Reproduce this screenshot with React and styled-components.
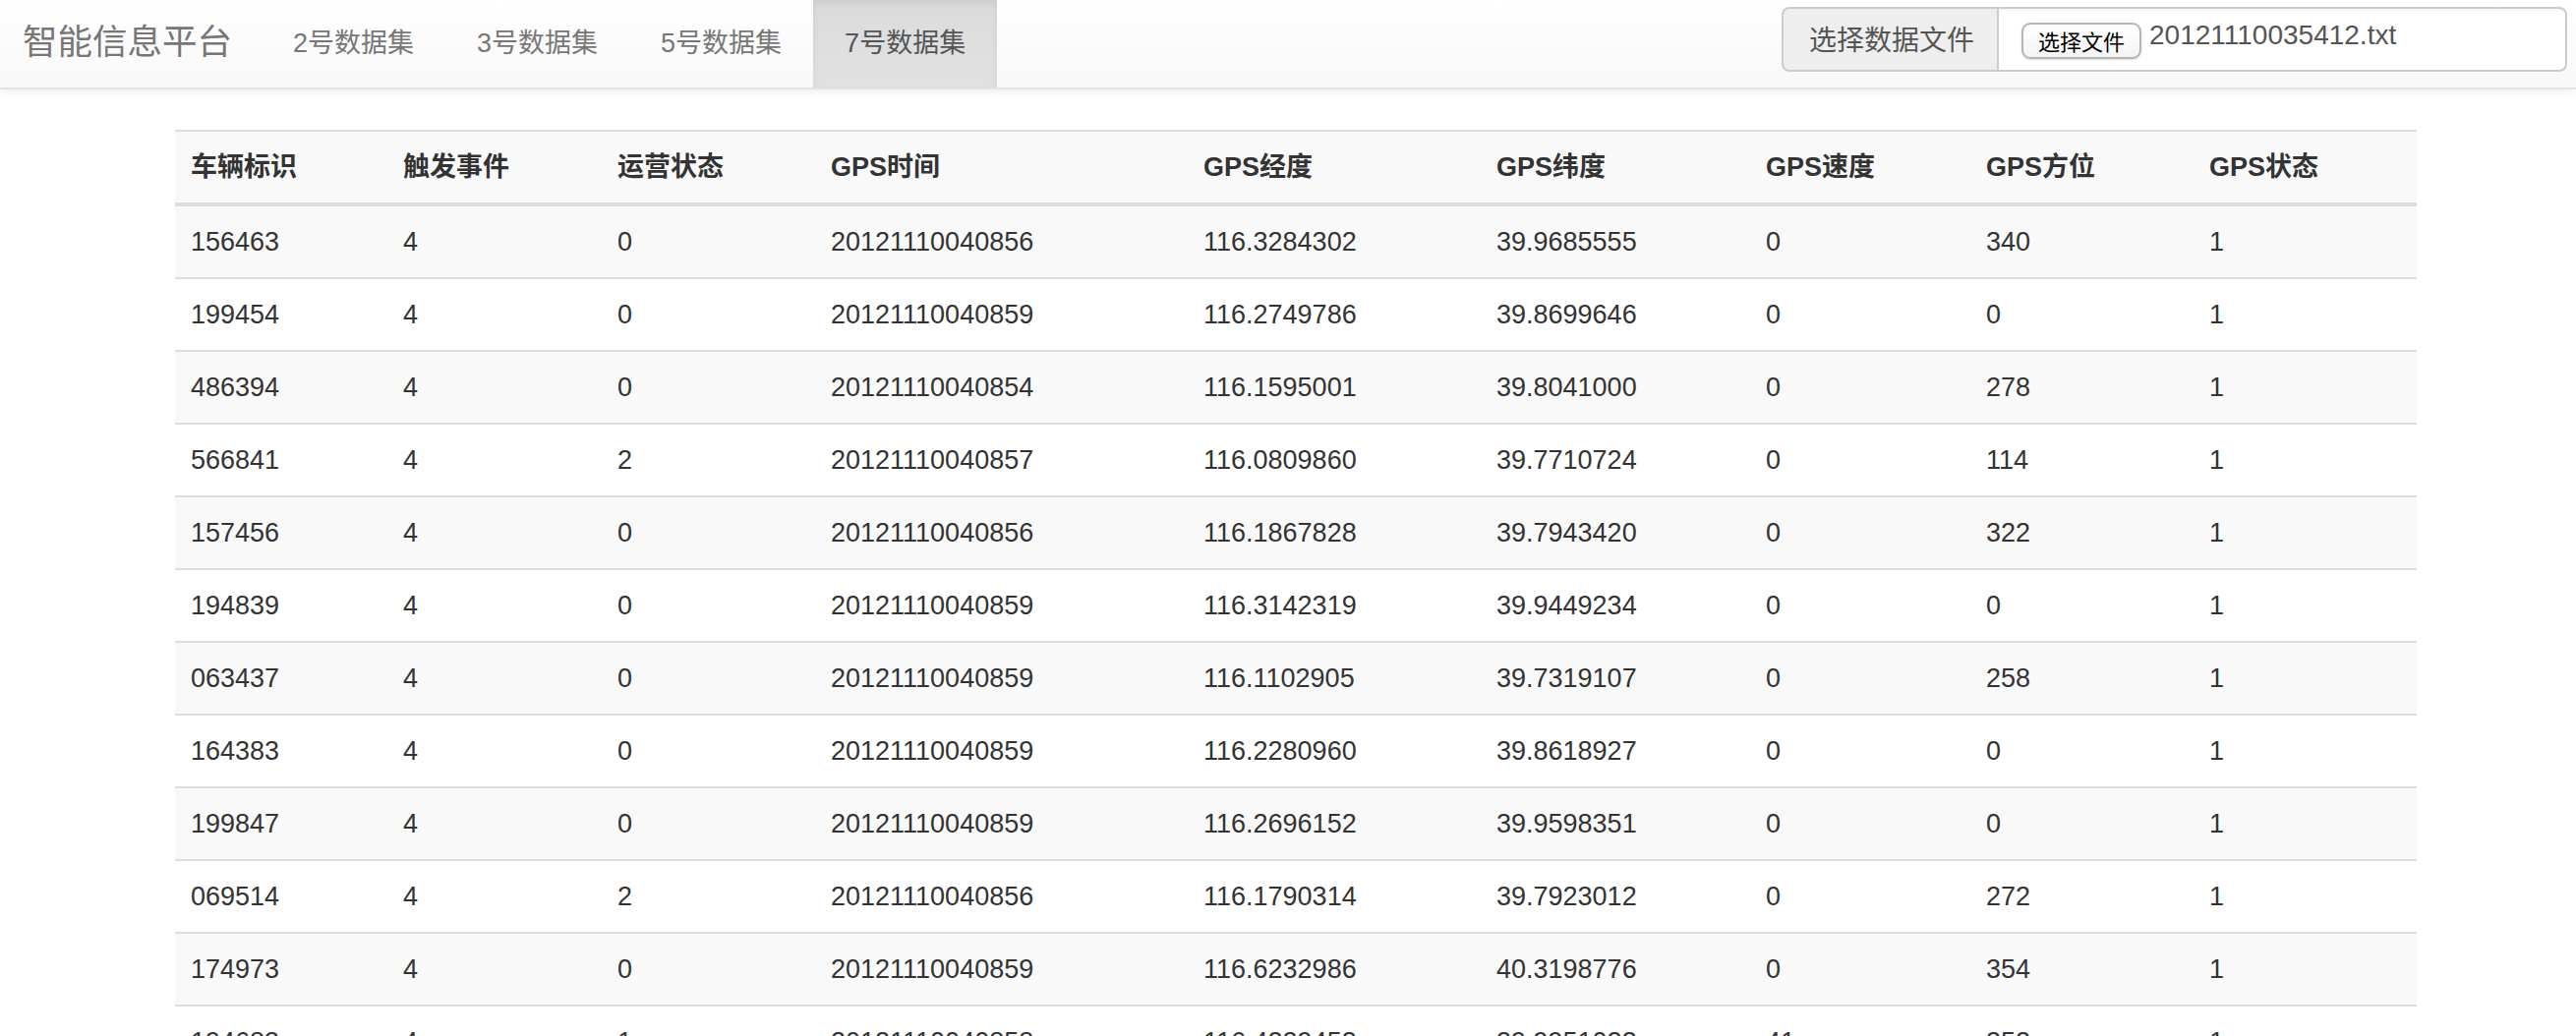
import React from "react";
import styled, { createGlobalStyle } from "styled-components";

const GlobalStyle = createGlobalStyle`
  html, body {
    margin: 0;
    padding: 0;
    background: #fff;
  }
  body {
    font-family: "Liberation Sans", "Noto Sans CJK SC", sans-serif;
    color: #333;
  }
  * {
    box-sizing: border-box;
  }
`;

const Navbar = styled.nav`
  display: flex;
  align-items: stretch;
  height: 91px;
  padding: 0 9px 0 23px;
  background: linear-gradient(to bottom, #ffffff 0%, #f8f8f8 100%);
  border-bottom: 2px solid #e4e4e4;
  box-shadow: 0 2px 10px rgba(0, 0, 0, 0.075);
`;

const Brand = styled.a`
  display: flex;
  align-items: center;
  padding-bottom: 10px;
  margin-right: 30px;
  font-family: "Liberation Sans", "Noto Sans CJK SC", sans-serif;
  font-size: 35.5px;
  color: #777;
  text-decoration: none;
`;

const NavList = styled.ul`
  display: flex;
  list-style: none;
  margin: 0;
  padding: 0;
`;

const NavLink = styled.a`
  display: flex;
  align-items: center;
  height: 89px;
  padding: 0 32px 6px;
  font-size: 27px;
  color: ${(p) => (p.active ? "#555" : "#777")};
  text-decoration: none;
  background: ${(p) =>
    p.active ? "linear-gradient(to bottom, #dbdbdb 0%, #e2e2e2 100%)" : "transparent"};
  box-shadow: ${(p) => (p.active ? "inset 0 3px 9px rgba(0, 0, 0, 0.075)" : "none")};
`;

const FileGroup = styled.div`
  display: flex;
  margin-left: auto;
  margin-top: 7px;
  height: 66px;
  width: 799px;
`;

const FileAddon = styled.span`
  display: flex;
  align-items: center;
  width: 219px;
  padding: 0 0 2px 26px;
  font-size: 28px;
  color: #555;
  background: #eee;
  border: 2px solid #ccc;
  border-right: 0;
  border-radius: 8px 0 0 8px;
`;

const FileField = styled.div`
  flex: 1;
  display: flex;
  align-items: center;
  padding: 0 0 0 23px;
  background: #fff;
  border: 2px solid #ccc;
  border-radius: 0 8px 8px 0;
  box-shadow: inset 0 2px 2px rgba(0, 0, 0, 0.04);
`;

const ChooseButton = styled.button`
  height: 37px;
  padding: 0 15px;
  margin-top: 2px;
  font-family: "Noto Sans CJK SC", sans-serif;
  font-size: 22px;
  line-height: 1;
  color: #000;
  background: linear-gradient(to bottom, #ffffff 0%, #f4f4f4 100%);
  border: 2px solid #b5b5b5;
  border-radius: 9px;
  box-shadow: 0 1px 2px rgba(0, 0, 0, 0.15);
`;

const FileName = styled.span`
  margin-left: 8px;
  margin-bottom: 8px;
  font-size: 28px;
  color: #555;
`;

const Page = styled.div`
  padding-left: 16px;
`;

const Container = styled.div`
  width: 2280px;
  margin: 41px auto 0;
`;

const Table = styled.table`
  width: 100%;
  table-layout: fixed;
  border-collapse: separate;
  border-spacing: 0;
  font-size: 27px;
  color: #333;

  tbody tr + tr td {
    border-top: 2px solid #ddd;
  }
`;

const Col = styled.col`
  width: ${(p) => p.w}px;
`;

const HeadCell = styled.th`
  padding: 16px;
  line-height: 40px;
  text-align: left;
  font-weight: bold;
  background: #f9f9f9;
  border-top: 2px solid #ddd;
  border-bottom: 4px solid #ddd;
  white-space: nowrap;
`;

const Row = styled.tr`
  background: ${(p) => (p.striped ? "#f9f9f9" : "#fff")};
`;

const Cell = styled.td`
  padding: 16px;
  line-height: 40px;
  white-space: nowrap;
`;

const columns = [
  { title: "车辆标识", w: 216 },
  { title: "触发事件", w: 218 },
  { title: "运营状态", w: 217 },
  { title: "GPS时间", w: 379 },
  { title: "GPS经度", w: 298 },
  { title: "GPS纬度", w: 274 },
  { title: "GPS速度", w: 224 },
  { title: "GPS方位", w: 227 },
  { title: "GPS状态", w: 227 },
];

const rows = [
  ["156463", "4", "0", "20121110040856", "116.3284302", "39.9685555", "0", "340", "1"],
  ["199454", "4", "0", "20121110040859", "116.2749786", "39.8699646", "0", "0", "1"],
  ["486394", "4", "0", "20121110040854", "116.1595001", "39.8041000", "0", "278", "1"],
  ["566841", "4", "2", "20121110040857", "116.0809860", "39.7710724", "0", "114", "1"],
  ["157456", "4", "0", "20121110040856", "116.1867828", "39.7943420", "0", "322", "1"],
  ["194839", "4", "0", "20121110040859", "116.3142319", "39.9449234", "0", "0", "1"],
  ["063437", "4", "0", "20121110040859", "116.1102905", "39.7319107", "0", "258", "1"],
  ["164383", "4", "0", "20121110040859", "116.2280960", "39.8618927", "0", "0", "1"],
  ["199847", "4", "0", "20121110040859", "116.2696152", "39.9598351", "0", "0", "1"],
  ["069514", "4", "2", "20121110040856", "116.1790314", "39.7923012", "0", "272", "1"],
  ["174973", "4", "0", "20121110040859", "116.6232986", "40.3198776", "0", "354", "1"],
  ["194683", "4", "1", "20121110040858", "116.4229453", "39.9951023", "41", "352", "1"],
  ["151208", "4", "0", "20121110040857", "116.3470154", "39.9025612", "0", "90", "1"],
];

const tabs = ["2号数据集", "3号数据集", "5号数据集", "7号数据集"];

const App = () => {
  return (
    <>
      <GlobalStyle />
      <Navbar>
        <Brand href="#">智能信息平台</Brand>
        <NavList>
          {tabs.map((t) => (
            <li key={t}>
              <NavLink href="#" active={t === "7号数据集" ? 1 : 0}>
                {t}
              </NavLink>
            </li>
          ))}
        </NavList>
        <FileGroup>
          <FileAddon>选择数据文件</FileAddon>
          <FileField>
            <ChooseButton type="button">选择文件</ChooseButton>
            <FileName>20121110035412.txt</FileName>
          </FileField>
        </FileGroup>
      </Navbar>
      <Page>
        <Container>
          <Table>
            <colgroup>
              {columns.map((c) => (
                <Col key={c.title} w={c.w} />
              ))}
            </colgroup>
            <thead>
              <tr>
                {columns.map((c) => (
                  <HeadCell key={c.title}>{c.title}</HeadCell>
                ))}
              </tr>
            </thead>
            <tbody>
              {rows.map((r, i) => (
                <Row key={i} striped={i % 2 === 0 ? 1 : 0}>
                  {r.map((v, j) => (
                    <Cell key={j}>{v}</Cell>
                  ))}
                </Row>
              ))}
            </tbody>
          </Table>
        </Container>
      </Page>
    </>
  );
};

export default App;
